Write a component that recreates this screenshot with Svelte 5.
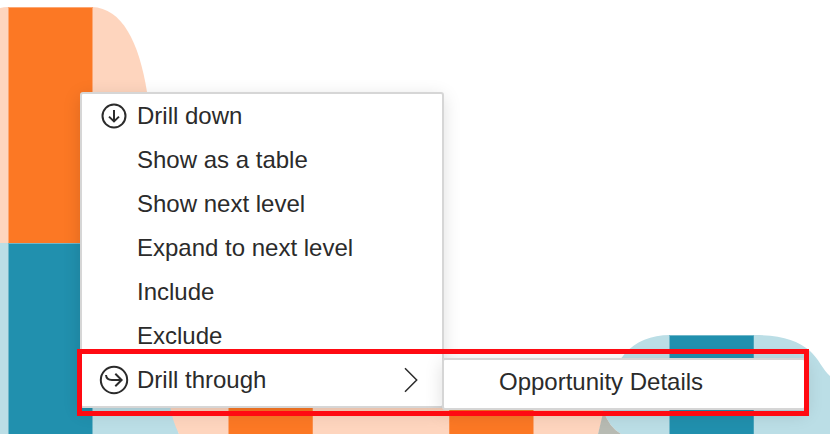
<script>
  const items = [
    { label: 'Drill down', icon: 'down' },
    { label: 'Show as a table' },
    { label: 'Show next level' },
    { label: 'Expand to next level' },
    { label: 'Include' },
    { label: 'Exclude' },
    { label: 'Drill through', icon: 'through', submenu: true }
  ];
</script>

<div class="stage">
  <svg class="chart" width="830" height="434" viewBox="0 0 830 434" aria-hidden="true">
    <path class="orange-soft" d="M0 8Q4 7 8 7H92C122 8 139 42 147 92L165 243H0Z" />
    <path class="teal-soft" d="M0 243H120C150 290 163 380 179 434H0Z" />
    <path class="orange-soft" d="M170 405H606L598 434H179Q172 420 170 405Z" />
    <path class="teal-soft" d="M603 410C610 360 632 335 670 335H754C782 335 798 341 809 350C819 359 823 370 830 376V434H621Q609 427 603 410Z" />
    <path class="overlap" d="M603.500 411Q609 427 621 434H598Z" />
    <path class="edge-orange" d="M8 7H93V243H8ZM228 400H313V434H228ZM449 400H534V434H449Z" />
    <path class="edge-teal" d="M8 243H93V434H8ZM669 335H754V434H669Z" />
    <path class="orange" d="M9 8H92V243H9ZM229 400H312.500V434H229ZM449.500 400H533V434H449.500Z" />
    <path class="teal" d="M9 244H92V434H9ZM670 336H753.500V434H670Z" />
  </svg>

  <div class="menu main" role="menu">
    {#each items as item}
      <div class="item" role="menuitem" tabindex="-1">
        <span class="icon">
          {#if item.icon === 'down'}
            <svg width="32" height="32" viewBox="0 0 32 32">
              <circle cx="16" cy="16" r="11.500" />
              <path d="M16 10V21.200M11 16.600L16 21.400L21 16.600" />
            </svg>
          {:else if item.icon === 'through'}
            <svg width="32" height="32" viewBox="0 0 32 32">
              <circle cx="16" cy="16" r="13.200" />
              <path d="M8 11C8.300 14.500 10.500 16 14 16H23.500M17.300 9.800L23.600 16L17.300 22.200" />
            </svg>
          {/if}
        </span>
        <span class="label">{item.label}</span>
        {#if item.submenu}
          <svg class="chevron" width="16" height="26" viewBox="0 0 16 26">
            <path d="M1 1.300L12.700 13L1 24.700" />
          </svg>
        {/if}
      </div>
    {/each}
  </div>

  <div class="menu flyout" role="menu">
    <div class="item" role="menuitem" tabindex="-1">
      <span class="icon"></span>
      <span class="label">Opportunity Details</span>
    </div>
  </div>

  <div class="highlight"></div>
</div>

<style>
  .stage {
    position: relative;
    width: 830px;
    height: 434px;
    overflow: hidden;
    background: #fff;
    font-family: "Liberation Sans", Arial, sans-serif;
    font-size: 24px;
    color: #2b2b2b;
  }
  .chart { display: block; }
  .orange { fill: #fc7824; }
  .teal { fill: #2190ae; }
  .orange-soft { fill: #fed5be; }
  .teal-soft { fill: #bbdee6; }
  .overlap { fill: #b8bbb3; }
  .edge-orange { fill: #fca773; }
  .edge-teal { fill: #70b7c9; }
  .menu {
    position: absolute;
    box-sizing: border-box;
    width: 364px;
    padding-bottom: 4px;
    border: 2px solid #d6d6d6;
    border-radius: 3px;
    background: #fff;
    box-shadow: 0 4px 18px rgba(0, 0, 0, 0.13);
  }
  .main { left: 80px; top: 92px; }
  .flyout { left: 442px; top: 358px; }
  .item {
    display: flex;
    align-items: center;
    height: 44px;
    padding: 0 22px 0 16px;
    line-height: 44px;
    white-space: nowrap;
    outline: none;
  }
  .icon {
    display: flex;
    flex: none;
    width: 32px;
    height: 32px;
    margin-right: 7px;
  }
  .label { flex: 1; }
  .item svg {
    fill: none;
    stroke: #2b2b2b;
    stroke-width: 2;
  }
  .item .chevron { stroke-width: 1.500; }
  .highlight {
    position: absolute;
    box-sizing: border-box;
    left: 77px;
    top: 349px;
    width: 732px;
    height: 67px;
    border: 5px solid #ff0a12;
  }
</style>
